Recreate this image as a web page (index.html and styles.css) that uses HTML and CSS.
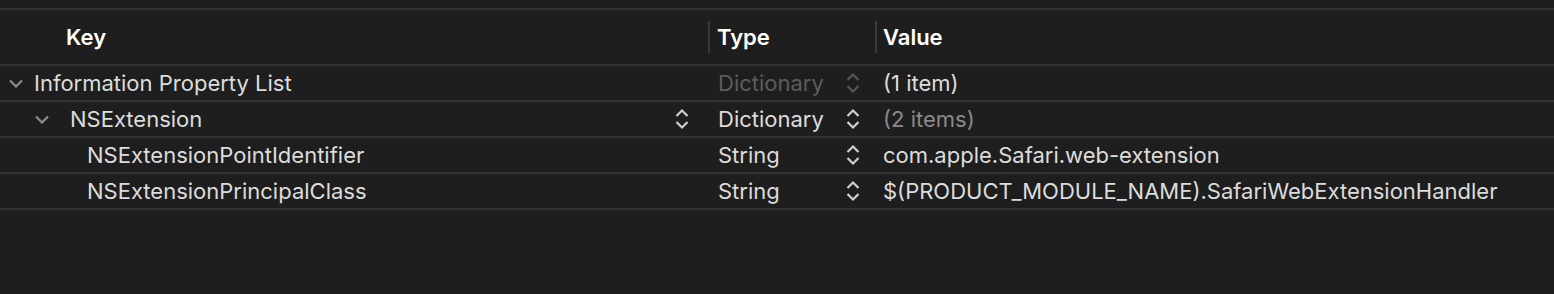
FILE: index.html
```html
<!DOCTYPE html>
<html lang="en">
<head>
    <meta charset="UTF-8">
    <meta name="viewport" content="width=device-width, initial-scale=1.0">
    <title>Info.plist</title>
    <link rel="stylesheet" href="styles.css">
</head>
<body>
    <div class="plist">
        <div class="row header">
            <div class="cell key"><span class="head-key">Key</span></div>
            <div class="cell type"><span class="sep"></span>Type</div>
            <div class="cell value"><span class="sep"></span>Value</div>
        </div>

        <div class="row">
            <div class="cell key level-0">
                <svg class="disclosure" width="16" height="9" viewBox="0 0 16 9"><path d="M2 1.5 L8 7.5 L14 1.5" /></svg>
                Information Property List
            </div>
            <div class="cell type dim">
                <span class="type-name">Dictionary</span>
                <svg class="stepper" width="14" height="22" viewBox="0 0 14 22"><path d="M1.5 8 L7 2.5 L12.5 8 M1.5 14 L7 19.5 L12.5 14" /></svg>
            </div>
            <div class="cell value">(1 item)</div>
        </div>

        <div class="row">
            <div class="cell key level-1">
                <svg class="disclosure" width="16" height="9" viewBox="0 0 16 9"><path d="M2 1.5 L8 7.5 L14 1.5" /></svg>
                NSExtension
                <svg class="stepper key-stepper" width="14" height="22" viewBox="0 0 14 22"><path d="M1.5 8 L7 2.5 L12.5 8 M1.5 14 L7 19.5 L12.5 14" /></svg>
            </div>
            <div class="cell type">
                <span class="type-name">Dictionary</span>
                <svg class="stepper" width="14" height="22" viewBox="0 0 14 22"><path d="M1.5 8 L7 2.5 L12.5 8 M1.5 14 L7 19.5 L12.5 14" /></svg>
            </div>
            <div class="cell value muted">(2 items)</div>
        </div>

        <div class="row">
            <div class="cell key level-2">NSExtensionPointIdentifier</div>
            <div class="cell type">
                <span class="type-name">String</span>
                <svg class="stepper" width="14" height="22" viewBox="0 0 14 22"><path d="M1.5 8 L7 2.5 L12.5 8 M1.5 14 L7 19.5 L12.5 14" /></svg>
            </div>
            <div class="cell value">com.apple.Safari.web-extension</div>
        </div>

        <div class="row">
            <div class="cell key level-2">NSExtensionPrincipalClass</div>
            <div class="cell type">
                <span class="type-name">String</span>
                <svg class="stepper" width="14" height="22" viewBox="0 0 14 22"><path d="M1.5 8 L7 2.5 L12.5 8 M1.5 14 L7 19.5 L12.5 14" /></svg>
            </div>
            <div class="cell value">$(PRODUCT_MODULE_NAME).SafariWebExtensionHandler</div>
        </div>
    </div>
</body>
</html>
```

FILE: styles.css
```css
* {
    margin: 0;
    padding: 0;
    box-sizing: border-box;
}

body {
    background: #1e1e1e;
    font-family: Inter, 'Noto Sans', sans-serif;
    color: #dcdcdc;
    height: 100vh;
    overflow: hidden;
}

.plist {
    padding-top: 8px;
}

.row {
    display: grid;
    grid-template-columns: 708px 167px 1fr;
    height: 36px;
    border-bottom: 2px solid #333333;
    font-size: 22px;
}

.row.header {
    height: 58px;
    border-top: 2px solid #333333;
    color: #ffffff;
    font-weight: 600;
}

.cell {
    display: flex;
    align-items: center;
    white-space: nowrap;
}

.head-key {
    padding-left: 66px;
}

.header .type,
.header .value {
    padding: 0;
}

.sep {
    width: 2px;
    height: 32px;
    background: #3a3a3a;
    margin-right: 7px;
}

.header .value .sep {
    margin-right: 6px;
}

.key.level-0 {
    padding-left: 8px;
}

.level-0 .disclosure {
    margin-right: 10px;
}

.key.level-1 {
    padding-left: 34px;
    padding-right: 19px;
}

.level-1 .disclosure {
    margin-right: 20px;
}

.key.level-2 {
    padding-left: 87px;
}

.disclosure {
    fill: none;
    stroke: #8c8c8c;
    stroke-width: 2.2;
}

.key-stepper {
    margin-left: auto;
}

.type {
    padding-left: 10px;
    padding-right: 15px;
}

.type-name {
    flex: 1;
}

.stepper {
    fill: none;
    stroke: #d0d0d0;
    stroke-width: 2.2;
}

.dim {
    color: #5c5c5c;
}

.dim .stepper {
    stroke: #555555;
}

.value {
    padding-left: 8px;
}

.muted {
    color: #8a8a8a;
}
```
